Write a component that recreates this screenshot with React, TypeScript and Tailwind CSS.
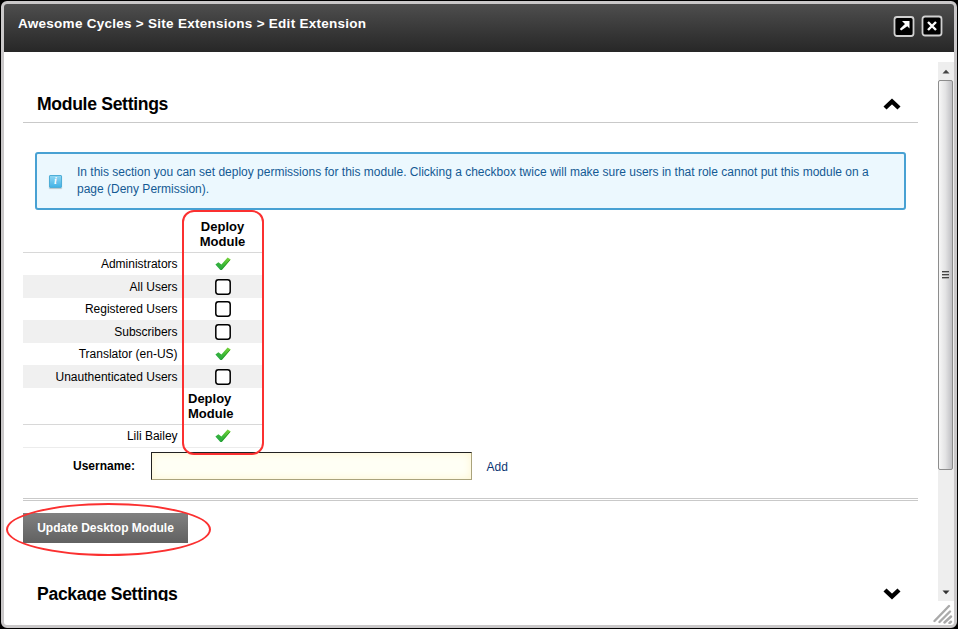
import React from "react";

function Check() {
  return (
    <svg width="16" height="16" viewBox="0 0 16 16" className="block">
      <defs>
        <linearGradient id="leaf" x1="1" y1="0" x2="0" y2="1">
          <stop offset="0" stopColor="#7ed63c" />
          <stop offset="0.5" stopColor="#3fbb35" />
          <stop offset="1" stopColor="#1f9f4d" />
        </linearGradient>
      </defs>
      <path d="M0.4 8.4 3.4 6.2 6.4 8.6 12.6 1.6 15.8 3.4 6.9 14 5.3 14Z" fill="url(#leaf)" />
      <path d="M6.2 13.6 14.8 4" stroke="#1c8f1c" strokeWidth="0.7" fill="none" />
    </svg>
  );
}

function Box() {
  return (
    <svg width="16" height="16" viewBox="0 0 16 16" className="block">
      <rect x="0.8" y="0.8" width="14.4" height="14.4" rx="2.6" fill="#fff" stroke="#000" strokeWidth="1.5" />
    </svg>
  );
}

function Row({ name, on, className }: { name: string; on: boolean; className: string }) {
  return (
    <div className={"flex w-[239px] items-center " + className}>
      <div className="w-[155px] shrink-0 pr-[0.4px] text-right text-[12px] leading-[15px]">{name}</div>
      <div className="ml-[5px] flex w-[79px] shrink-0 justify-center">{on ? <Check /> : <Box />}</div>
    </div>
  );
}

function Chevron({ down = false }: { down?: boolean }) {
  return (
    <svg width="18" height="12" viewBox="0 0 18 12" className={down ? "rotate-180" : ""}>
      <path d="M2 10 9 3.4 16 10" fill="none" stroke="#000" strokeWidth="4.4" />
    </svg>
  );
}

function HeaderButtons() {
  return (
    <div className="mr-[11px] mt-[11px] flex gap-[6px]">
      <svg width="22" height="22" viewBox="0 0 22 22">
        <rect x="1.5" y="2" width="19" height="19" rx="2.5" fill="#000" stroke="#d0d0d0" strokeWidth="1.8" />
        <path d="M9 6H16.5V13.5L14.3 11.3 8.2 15.4 6.8 14 12 9Z" fill="#fff" />
      </svg>
      <svg width="22" height="22" viewBox="0 0 22 22">
        <rect x="1.5" y="1.5" width="19" height="19" rx="2.5" fill="#000" stroke="#d0d0d0" strokeWidth="1.8" />
        <path d="M7 7 15 15M15 7 7 15" stroke="#fff" strokeWidth="2.4" />
      </svg>
    </div>
  );
}

function Scrollbar() {
  return (
    <div className="flex h-[539px] w-4 flex-col bg-[#eeeeee]">
      <div className="flex h-[18px] items-center justify-center">
        <svg width="8" height="5" viewBox="0 0 8 5"><path d="M0.5 4.5 4 0.8 7.5 4.5Z" fill="#444" /></svg>
      </div>
      <div className="flex h-[390px] w-[15px] items-center justify-center rounded-[2px] border border-[#8d8d8d] bg-linear-to-r from-[#f7f7f7] via-[#e3e3e4] to-[#bfbfc3]">
        <div className="flex w-[7px] flex-col gap-[1px]">
          <span className="h-[2px] border-t border-[#444] bg-[#aaa]" />
          <span className="h-[2px] border-t border-[#444] bg-[#aaa]" />
          <span className="h-[2px] border-t border-[#444] bg-[#aaa]" />
        </div>
      </div>
      <div className="flex-1" />
      <div className="flex h-[17px] items-center justify-center">
        <svg width="8" height="5" viewBox="0 0 8 5"><path d="M0.5 0.5 4 4.2 7.5 0.5Z" fill="#333" /></svg>
      </div>
    </div>
  );
}

export default function App() {
  return (
    <div className="relative h-[629px] w-[958px] bg-black p-px font-['Liberation_Sans',Arial,sans-serif] text-black">
      <div className="flex h-[627px] w-[956px] flex-col overflow-hidden rounded-[6px] border-[3px] border-[#cac8c9] bg-white">
        <header className="flex h-12 shrink-0 justify-between bg-linear-to-b from-[#4e4e4e] to-[#272727]">
          <h1 className="ml-[14px] mt-3 text-[13.5px] font-bold leading-4 tracking-[0.27px] whitespace-nowrap text-white">
            Awesome Cycles &gt; Site Extensions &gt; Edit Extension
          </h1>
          <HeaderButtons />
        </header>
        <div className="mt-[10px] flex h-[539px] shrink-0 justify-between">
          <main className="ml-[19px] h-[539px] w-[895px] overflow-hidden">
            <div className="flex h-[61px] items-end justify-between border-b border-[#c9c9c9] pr-[17px] pl-[14px]">
              <h2 className="mb-2 text-[17.6px] font-bold leading-5 tracking-[-0.32px] whitespace-nowrap">Module Settings</h2>
              <div className="mb-3"><Chevron /></div>
            </div>
            <div className="mt-[29px] ml-3 flex h-[58px] w-[871px] items-center rounded-[3px] border-2 border-[#48a1d3] bg-[#ecf8fe]">
              <div className="ml-3 flex h-[13px] w-[13px] items-center justify-center rounded-[1px] border border-[#4faed7] bg-linear-to-b from-[#8dd5f2] to-[#41b3e6] font-['Liberation_Serif',serif] text-[10px] font-bold leading-none text-white italic shadow-[0_1px_1px_#b5c5cc]">
                i
              </div>
              <p className="ml-[15px] text-[12px] leading-[17px] whitespace-nowrap text-[#145a94]">
                In this section you can set deploy permissions for this module. Clicking a checkbox twice will make sure users in that role cannot put this module on a
                <br />
                page (Deny Permission).
              </p>
            </div>
            <div className="flex h-[43px] w-[239px] items-end justify-end border-b border-[#d8d8d8]">
              <div className="mb-[3px] w-[79px] text-center text-[13px] font-bold leading-[15px]">Deploy<br />Module</div>
            </div>
            <Row name="Administrators" on className="h-[22px]" />
            <Row name="All Users" on={false} className="h-[23px] bg-[#f0f0f0] pt-px" />
            <Row name="Registered Users" on={false} className="h-[22px]" />
            <Row name="Subscribers" on={false} className="h-[23px] bg-[#f0f0f0] pt-px" />
            <Row name="Translator (en-US)" on className="h-[22px]" />
            <Row name="Unauthenticated Users" on={false} className="h-[23px] bg-[#f0f0f0] pt-px" />
            <div className="flex h-[37px] w-[239px] items-end border-b border-[#d8d8d8]">
              <div className="mb-[3px] ml-[165px] text-[13px] font-bold leading-[15px]">Deploy<br />Module</div>
            </div>
            <Row name="Lili Bailey" on className="h-[23px] border-b border-[#ececec]" />
            <div className="mt-1 flex h-7 items-center">
              <label htmlFor="username" className="w-[112px] text-right text-[12px] font-bold">Username:</label>
              <input
                id="username"
                className="ml-4 h-7 w-[321px] border border-t-[#222] border-r-[#aaa37c] border-b-[#aaa37c] border-l-[#222] bg-[#fffff5] shadow-[inset_0_0_8px_#fdf4cf] outline-none"
              />
              <a className="ml-[14.5px] mt-px text-[12px] text-[#0b3573]">Add</a>
            </div>
            <div className="mt-[18px] h-[3px] border-y border-[#c9c9c9]" />
            <button className="mt-3 block h-[30px] w-[165px] bg-linear-to-b from-[#818181] to-[#616161] text-[12px] font-bold whitespace-nowrap text-white">
              Update Desktop Module
            </button>
            <div className="mt-[41px] flex items-start justify-between pr-[17px] pl-[14px]">
              <h2 className="h-[17px] overflow-hidden text-[17.6px] font-bold leading-5 tracking-[-0.32px] whitespace-nowrap">Package Settings</h2>
              <div className="mt-1"><Chevron down /></div>
            </div>
          </main>
          <Scrollbar />
        </div>
        <div className="flex justify-end pt-[3px] pr-[1px]">
          <svg width="20" height="20" viewBox="0 0 20 20">
            <path d="M1.5 17 16 2M6.5 18 17 7.5M11.5 18.5 18 12.5M16.5 19 18 17.8" stroke="#aaa" strokeWidth="2.4" strokeLinecap="round" />
          </svg>
        </div>
      </div>
      <div className="absolute top-[210px] left-[182px] h-[245px] w-[82px] rounded-[12px] border-2 border-[#fb3030]" />
      <div className="absolute top-[503px] left-[6px] h-[53px] w-[205px] rounded-[50%] border-2 border-[#fb3030]" />
    </div>
  );
}
